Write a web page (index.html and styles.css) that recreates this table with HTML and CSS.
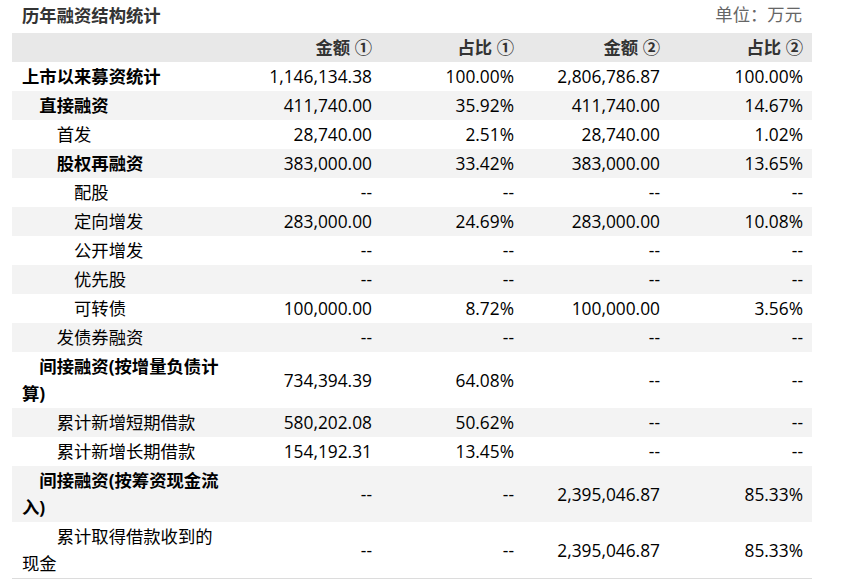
FILE: index.html
```html
<!DOCTYPE html>
<html lang="zh-CN">
<head>
<meta charset="utf-8">
<title>历年融资结构统计</title>
<link rel="stylesheet" href="styles.css">
</head>
<body>
<div class="panel">
  <div class="panel-head">
    <div class="title">历年融资结构统计</div>
    <div class="unit">单位：万元</div>
  </div>
  <table class="fin">
    <colgroup>
      <col class="c-name"><col class="c2"><col class="c3"><col class="c4"><col class="c5">
    </colgroup>
    <thead>
      <tr><th></th><th>金额 ①</th><th>占比 ①</th><th>金额 ②</th><th>占比 ②</th></tr>
    </thead>
    <tbody>
      <tr><td class="lv0 b">上市以来募资统计</td><td>1,146,134.38</td><td>100.00%</td><td>2,806,786.87</td><td>100.00%</td></tr>
      <tr><td class="lv1 b">直接融资</td><td>411,740.00</td><td>35.92%</td><td>411,740.00</td><td>14.67%</td></tr>
      <tr><td class="lv2">首发</td><td>28,740.00</td><td>2.51%</td><td>28,740.00</td><td>1.02%</td></tr>
      <tr><td class="lv2 b">股权再融资</td><td>383,000.00</td><td>33.42%</td><td>383,000.00</td><td>13.65%</td></tr>
      <tr><td class="lv3">配股</td><td>--</td><td>--</td><td>--</td><td>--</td></tr>
      <tr><td class="lv3">定向增发</td><td>283,000.00</td><td>24.69%</td><td>283,000.00</td><td>10.08%</td></tr>
      <tr><td class="lv3">公开增发</td><td>--</td><td>--</td><td>--</td><td>--</td></tr>
      <tr><td class="lv3">优先股</td><td>--</td><td>--</td><td>--</td><td>--</td></tr>
      <tr><td class="lv3">可转债</td><td>100,000.00</td><td>8.72%</td><td>100,000.00</td><td>3.56%</td></tr>
      <tr><td class="lv2">发债券融资</td><td>--</td><td>--</td><td>--</td><td>--</td></tr>
      <tr><td class="lv1 b">间接融资(按增量负债计算)</td><td>734,394.39</td><td>64.08%</td><td>--</td><td>--</td></tr>
      <tr><td class="lv2">累计新增短期借款</td><td>580,202.08</td><td>50.62%</td><td>--</td><td>--</td></tr>
      <tr><td class="lv2">累计新增长期借款</td><td>154,192.31</td><td>13.45%</td><td>--</td><td>--</td></tr>
      <tr><td class="lv1 b">间接融资(按筹资现金流入)</td><td>--</td><td>--</td><td>2,395,046.87</td><td>85.33%</td></tr>
      <tr class="last"><td class="lv2">累计取得借款收到的现金</td><td>--</td><td>--</td><td>2,395,046.87</td><td>85.33%</td></tr>
    </tbody>
  </table>
</div>
</body>
</html>
```
FILE: styles.css
```css
html, body {
  margin: 0;
  padding: 0;
  background: #fff;
}
body {
  font-family: "Open Sans", "Noto Sans CJK SC", sans-serif;
  font-size: 17.33px;
  color: #000;
}
.panel {
  width: 800px;
  margin-left: 12px;
}
.panel-head {
  height: 33px;
  display: flex;
  justify-content: space-between;
  align-items: center;
  padding: 0 10px;
  box-sizing: border-box;
}
.title {
  font-weight: bold;
  color: #333;
  line-height: 27px;
  margin-top: -3px;
}
.unit {
  color: #666;
  line-height: 27px;
  margin-top: -5px;
}
.fin {
  width: 800px;
  border-collapse: collapse;
  table-layout: fixed;
}
.c-name { width: 224px; }
.c2 { width: 145px; }
.c3 { width: 142px; }
.c4 { width: 146px; }
.c5 { width: 143px; }
.fin th, .fin td {
  padding: 1px 9px 1px 10px;
  line-height: 27px;
  text-align: right;
  vertical-align: middle;
  white-space: nowrap;
}
.fin td:first-child {
  text-align: left;
  white-space: normal;
  padding-right: 10px;
}
.fin thead tr {
  background: #e8e8e8;
}
.fin th {
  font-weight: bold;
  color: #333;
}
.fin tbody tr:nth-child(even) {
  background: #f3f3f3;
}
.fin tr.last td {
  border-bottom: 1px solid #dcdcdc;
}
.b { font-weight: bold; }
.lv0 { text-indent: 0; }
.lv1 { text-indent: 1em; }
.lv2 { text-indent: 2em; }
.lv3 { text-indent: 3em; }
```
